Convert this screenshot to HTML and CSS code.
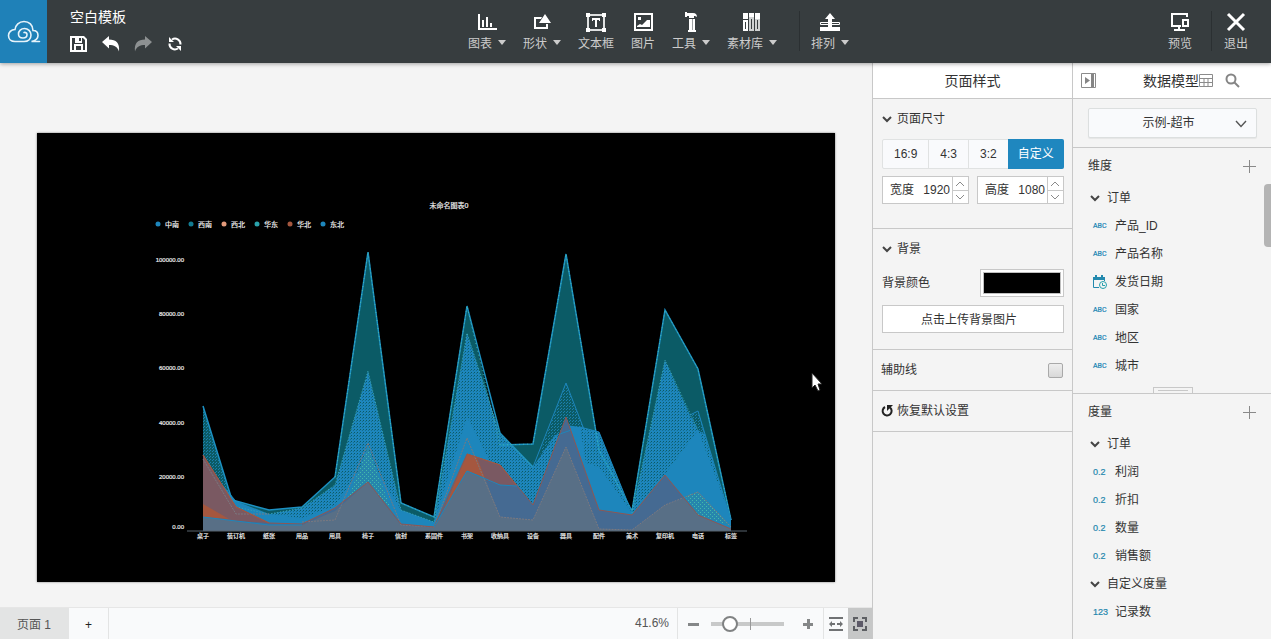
FILE: index.html
```html
<!DOCTYPE html>
<html lang="zh-CN">
  <head>
    <meta charset="UTF-8" />
    <meta name="viewport" content="width=device-width, initial-scale=1.0" />
    <title>空白模板</title>
    <link rel="stylesheet" href="styles.css">
  </head>
  <body>
    <header class="topbar">
      <div class="brand">
        <a class="logo" href="#" aria-label="首页">
          <svg width="34" height="24" viewBox="0 0 34 24" fill="none" stroke="#e6f3fa" stroke-width="1.600" stroke-linecap="round">
            <path d="M32.500 21.500H24.500C29 20.500 31 18.500 31 15.500C31 12.500 29 10.500 26 10.500C26 5 22 1.500 17 1.500C12 1.500 8.500 5 8 9.500C4 9.500 1.500 12.500 1.500 15.500C1.500 19 4 21.500 8 21.500H17C21.500 21.500 24 18.500 24 15C24 11.500 21 8.500 17.500 8.500C14 8.500 11.500 11 11.500 14C11.500 16.500 13.500 18 16 18C18.500 18 20 16.500 20 14.500C20 13 18.500 12 17 12.500" />
          </svg>
        </a>
        <div class="doc">
          <h1 class="doc-title">空白模板</h1>
          <div class="doc-actions">
            <button class="icon-btn" aria-label="保存">
              <svg width="18" height="16" viewBox="0 0 18 16"><path fill="#fff" fill-rule="evenodd" d="M0 0H14L17 3V16H0ZM2 2V14H4V8H13V14H15V4L13 2H12V7H5V2ZM9 2H11V5H9ZM6 10V14H11V10Z" /></svg>
            </button>
            <button class="icon-btn" aria-label="撤销">
              <svg width="18" height="16" viewBox="0 0 18 16"><path fill="#fff" d="M0 6L7 0V3.500C14 3.500 18 7 17 15.500C15.500 10.500 12 9 7 9V12.500Z" /></svg>
            </button>
            <button class="icon-btn" aria-label="重做" disabled>
              <svg width="18" height="16" viewBox="0 0 18 16"><path fill="#8d9192" d="M18 6L11 0V3.500C4 3.500 0 7 1 15.500C2.500 10.500 6 9 11 9V12.500Z" /></svg>
            </button>
            <button class="icon-btn" aria-label="刷新">
              <svg width="18" height="16" viewBox="0 0 18 16"><g fill="none" stroke="#fff" stroke-width="2"><path d="M6 3.500A5.500 5.500 0 0 1 14.500 8.500" /><path d="M12 12.500A5.500 5.500 0 0 1 3.500 7.500" /></g><path fill="#fff" d="M3 1V6H8ZM15 15V10H10Z" /></svg>
            </button>
          </div>
        </div>
      </div>

      <nav class="tools">
        <button class="tool">
          <svg width="20" height="20" viewBox="0 0 20 20"><path fill="#fff" d="M1 2H3V16H20V18H1ZM5 8H7V15H5ZM9 5H11V15H9ZM13 11H15V15H13Z" /></svg>
          <span class="tool-label">图表<i class="caret"></i></span>
        </button>
        <button class="tool">
          <svg width="20" height="20" viewBox="0 0 20 20"><path fill="#fff" d="M13 2L19 11H7ZM2 5H10L9 7H4V15H14V12H16V17H2Z" /></svg>
          <span class="tool-label">形状<i class="caret"></i></span>
        </button>
        <button class="tool">
          <svg width="22" height="20" viewBox="0 0 22 20"><path fill="none" stroke="#dfe1e1" stroke-width="2" d="M3 3H19V18H3Z" /><path fill="#fff" d="M1 1H5V5H1ZM17 1H21V5H17ZM1 16H5V20H1ZM17 16H21V20H17ZM7 6H15V9H14V8H12V15H10V8H8V9H7Z" /></svg>
          <span class="tool-label">文本框</span>
        </button>
        <button class="tool">
          <svg width="20" height="20" viewBox="0 0 20 20"><path fill="#fff" fill-rule="evenodd" d="M1 1H20V19H1ZM3 3V17H18V3ZM5 5H8V8H5ZM4 14L7 12L9 13L14 8H17V15H4Z" /></svg>
          <span class="tool-label">图片</span>
        </button>
        <button class="tool">
          <svg width="16" height="20" viewBox="0 0 16 20"><path fill="#fff" d="M2 0H4V1H10C13 1 14 3 14 5C13 4 12 4 11 4V6H6V4H4V5H2ZM6 7H12V18H13V20H5V18H6Z" /><path stroke="#9da1a2" d="M9.500 7V18" /></svg>
          <span class="tool-label">工具<i class="caret"></i></span>
        </button>
        <button class="tool">
          <svg width="20" height="20" viewBox="0 0 20 20"><path fill="#fff" fill-rule="evenodd" d="M1 1H6V7H1ZM1 8H6V19H1ZM3 10V17H4V10Z" /><path fill="#cfd2d2" fill-rule="evenodd" d="M7 1H12V19H7ZM9 7V17H10V7ZM13 1H18V19H13ZM15 8V17H16V8Z" /><path fill="#fff" d="M7 1H12V5H7ZM13 1H18V7H13Z" /></svg>
          <span class="tool-label">素材库<i class="caret"></i></span>
        </button>
        <span class="divider"></span>
        <button class="tool">
          <svg width="22" height="20" viewBox="0 0 22 20"><path fill="#fff" d="M11 1L16 7H13V15H21V19H1V15H9V7H6Z" /><path fill="none" stroke="#fff" d="M9 10.500H1.500V12.500H9M13 10.500H20.500V12.500H13" /></svg>
          <span class="tool-label">排列<i class="caret"></i></span>
        </button>
      </nav>

      <div class="session">
        <button class="tool">
          <svg width="20" height="20" viewBox="0 0 20 20"><path fill="none" stroke="#fff" stroke-width="2" d="M17 5V2H2V14H11M9 14V18M4 18H15M13 8H18V14H13Z" /></svg>
          <span class="tool-label">预览</span>
        </button>
        <span class="divider"></span>
        <button class="tool">
          <svg width="20" height="20" viewBox="0 0 20 20"><path stroke="#fff" stroke-width="3" d="M2 2L18 18M18 2L2 18" /></svg>
          <span class="tool-label">退出</span>
        </button>
      </div>
    </header>

    <div class="workspace">
      <main class="editor">
        <div class="stage">
          <div class="board">
            <svg class="chart" viewBox="37 133 798 449" role="img" aria-label="未命名图表0">
              <defs>
                <pattern id="denseDots" width="3" height="3" patternUnits="userSpaceOnUse">
                  <rect width="3" height="3" fill="#1d86bc" />
                  <rect width="1" height="1" fill="#0b5b66" />
                  <rect x="2" y="1" width="1" height="1" fill="#156f8e" />
                </pattern>
                <pattern id="darkDots" width="3" height="3" patternUnits="userSpaceOnUse">
                  <rect width="3" height="3" fill="#0b5b66" />
                  <rect width="1" height="1" fill="#1b80ad" />
                  <rect x="2" y="1" width="1" height="1" fill="#1b80ad" />
                </pattern>
                <pattern id="mintDots" width="4" height="4" patternUnits="userSpaceOnUse">
                  <rect width="4" height="4" fill="#2686ad" />
                  <rect width="1" height="1" fill="#43b9aa" />
                  <rect x="2" y="2" width="1" height="1" fill="#43b9aa" />
                </pattern>
              </defs>

              <!-- areas, back to front -->
              <path fill="#0b5b66" d="M203 531V459L236 501L269 510L302 507L335 477L368 252L401 503L434 517L467 306L500 445L533 444L566 254L599 450L632 511L665 310L698 369L731 520V531Z" />
              <path fill="url(#darkDots)" d="M203 531V406L232 500L236 531ZM541 450L566 383L590 445L599 432L632 513V531H533Z" />
              <path fill="url(#denseDots)" d="M236 508L269 514L302 508L335 485L368 371L401 510L434 522L467 333L500 434L533 467L554 436L580 427L599 432L632 513L665 360L690 415L698 411L731 520V531H236Z" />
              <path fill="url(#darkDots)" d="M690 415L698 411L704 434L698 430Z" />
              <path fill="#1d86bc" d="M222 484L236 501L269 514L302 518L335 506L368 456L401 510L434 522L467 417L490 462L533 504L566 425L580 427L586 463L599 467L632 513L665 474L698 430L731 518V531H236Z" />
              <path fill="url(#mintDots)" d="M344 508L368 447L392 512L368 482ZM685 496L698 492L731 526L698 515Z" />
              <path fill="#456a92" d="M203 531V455L236 507L269 523L302 524L335 508L368 482L401 524L434 527L467 454L500 465L533 505L566 417L599 510L632 515L665 475L698 515L731 529V531Z" />
              <path fill="#7a5962" d="M203 531V455L236 507L269 523L236 521ZM472 456L500 465L517 486L500 485L485 480Z" />
              <path fill="#a5573f" d="M203 504L229 519L203 517ZM437 525L467 454L477 458L485 478L467 471Z" />
              <path fill="#586f86" d="M203 531V517L236 521L269 525L302 525L335 511L368 482L401 525L434 527L467 471L485 478L500 517L533 520L566 447L599 529L632 530L665 505L684 498L698 515L731 529V531Z" />

              <!-- series lines -->
              <g fill="none">
                <path stroke="#1c90c2" stroke-width="1.500" d="M203 406L232 500L236 501L269 510L302 507L335 477L368 252L401 503L434 517L467 306L500 433L533 467M500 445L533 444L566 254L599 450L632 511L665 310L698 369L731 520" />
                <path stroke="#45b9ae" stroke-dasharray="1 3" d="M335 477L368 252L401 503L434 517L467 306L500 445L533 444L566 254L599 450L632 511L665 310L698 369L731 520" />
                <path stroke="#1d86bc" d="M533 467L566 383L590 445M554 436L580 427L599 432L632 513M690 415L698 411L731 520" />
                <path stroke="#3ca6b0" stroke-dasharray="1 2" d="M236 507L269 514L302 508L335 485L368 371L401 510L434 522L467 333L500 434L533 467M632 513L665 360L698 430" />
                <path stroke="#7b7980" stroke-dasharray="2 1" d="M203 459L236 514L269 514M302 522L335 520L368 443L401 525L434 527L467 438L500 517L533 520L566 447L599 529L632 530L665 505L698 492L731 527" />
                <path stroke="#8d5754" d="M203 455L236 507L269 523L302 524L335 508L368 482L401 524L434 527L467 454L500 465L533 505L566 417L599 510L632 515L665 475L698 515L731 529" />
                <path stroke="#a5573f" d="M203 455L236 507L269 523M467 454L500 465L517 486" />
                <path stroke="#1d86bc" d="M203 517L236 521L269 525H302M434 527L467 471L500 485L517 486" />
                <path stroke="#59656e" d="M187 531H747" />
              </g>

              <g class="chart-legend">
                <circle cx="158" cy="224" r="2.500" fill="#1d86bc" /><text x="165" y="227">中南</text>
                <circle cx="191" cy="224" r="2.500" fill="#127b92" /><text x="198" y="227">西南</text>
                <circle cx="224" cy="224" r="2.500" fill="#e39a7a" /><text x="231" y="227">西北</text>
                <circle cx="257" cy="224" r="2.500" fill="#2aa3ac" /><text x="264" y="227">华东</text>
                <circle cx="290" cy="224" r="2.500" fill="#a5573f" /><text x="297" y="227">华北</text>
                <circle cx="323" cy="224" r="2.500" fill="#1d86bc" /><text x="330" y="227">东北</text>
                <text class="centered" x="449" y="208">未命名图表0</text>
              </g>
              <g class="chart-scale">
                <text x="184" y="262">100000.00</text>
                <text x="184" y="316">80000.00</text>
                <text x="184" y="370">60000.00</text>
                <text x="184" y="425">40000.00</text>
                <text x="184" y="479">20000.00</text>
                <text x="184" y="529">0.00</text>
              </g>
              <g class="chart-categories">
                <text x="203" y="538">桌子</text>
                <text x="236" y="538">装订机</text>
                <text x="269" y="538">纸张</text>
                <text x="302" y="538">用品</text>
                <text x="335" y="538">用具</text>
                <text x="368" y="538">椅子</text>
                <text x="401" y="538">信封</text>
                <text x="434" y="538">系固件</text>
                <text x="467" y="538">书架</text>
                <text x="500" y="538">收纳具</text>
                <text x="533" y="538">设备</text>
                <text x="566" y="538">器具</text>
                <text x="599" y="538">配件</text>
                <text x="632" y="538">美术</text>
                <text x="665" y="538">复印机</text>
                <text x="698" y="538">电话</text>
                <text x="731" y="538">标签</text>
              </g>
            </svg>
            <svg class="pointer" width="12" height="20" viewBox="0 0 12 20"><path fill="#fff" stroke="#222" stroke-width="1" d="M1 1V16L4 13L7 19L9 18L7 12H11Z" /></svg>
          </div>
        </div>

        <footer class="statusbar">
          <button class="page-tab page-tab-active">页面 1</button>
          <button class="page-tab page-tab-add" aria-label="新建页面">+</button>
          <output class="zoom-value">41.6%</output>
          <div class="zoom">
            <button class="icon-btn" aria-label="缩小"><svg width="12" height="12" viewBox="0 0 12 12"><path fill="#858788" d="M1 5H12V8H1Z" /></svg></button>
            <input class="zoom-range" type="range" min="0" max="100" value="20" aria-label="缩放">
            <button class="icon-btn" aria-label="放大"><svg width="12" height="12" viewBox="0 0 12 12"><path fill="#858788" d="M1 5H5V1H8V5H11V8H8V11H5V8H1Z" /></svg></button>
          </div>
          <button class="fit" aria-label="适应宽度">
            <svg width="16" height="16" viewBox="0 0 16 16"><path fill="#707274" d="M1 1H15V3H1ZM1 13H15V15H1ZM1 8L4 5V7H7V9H4V11ZM15 8L12 5V7H9V9H12V11Z" /></svg>
          </button>
          <button class="fit fit-active" aria-label="适应页面">
            <svg width="16" height="16" viewBox="0 0 16 16"><path fill="none" stroke="#5d5f63" stroke-width="2" d="M6 2H2V6M10 2H14V6M6 14H2V10M10 14H14V10" /><path fill="#5d5a68" d="M5 5H11V11H5Z" /></svg>
          </button>
        </footer>
      </main>

      <aside class="panel">
        <h2 class="panel-title">页面样式</h2>

        <section class="group group-size">
          <h3 class="group-title"><svg class="chevron" width="10" height="8" viewBox="0 0 10 8"><path d="M1 2L5 6L9 2" /></svg>页面尺寸</h3>
          <div class="ratios">
            <button class="ratio">16:9</button>
            <button class="ratio">4:3</button>
            <button class="ratio">3:2</button>
            <button class="ratio ratio-active">自定义</button>
          </div>
          <div class="dimensions">
            <label class="stepper">
              <span>宽度</span>
              <input type="text" value="1920">
              <svg class="stepper-arrows" width="16" height="26" viewBox="0 0 16 26"><path d="M0.500 0V26M0 13.500H16" stroke="#c8c8c8" /><path d="M4 9L8 5L12 9M4 18L8 22L12 18" stroke="#8a8a8a" /></svg>
            </label>
            <label class="stepper">
              <span>高度</span>
              <input type="text" value="1080">
              <svg class="stepper-arrows" width="16" height="26" viewBox="0 0 16 26"><path d="M0.500 0V26M0 13.500H16" stroke="#c8c8c8" /><path d="M4 9L8 5L12 9M4 18L8 22L12 18" stroke="#8a8a8a" /></svg>
            </label>
          </div>
        </section>

        <section class="group">
          <h3 class="group-title"><svg class="chevron" width="10" height="8" viewBox="0 0 10 8"><path d="M1 2L5 6L9 2" /></svg>背景</h3>
          <div class="field">
            <label for="bgColor">背景颜色</label>
            <input class="swatch" id="bgColor" type="color" value="#000000">
          </div>
          <button class="upload">点击上传背景图片</button>
        </section>

        <section class="group group-row">
          <label for="guides">辅助线</label>
          <input class="check" id="guides" type="checkbox">
        </section>

        <section class="group group-row">
          <button class="reset">
            <svg width="12" height="14" viewBox="0 0 12 14"><path fill="none" stroke="#222" stroke-width="2" d="M4 3A4.500 4.500 0 1 0 9 3.500" /><path fill="#222" d="M12 1H6V7L8 5Z" /></svg>
            恢复默认设置
          </button>
        </section>
      </aside>

      <aside class="panel panel-data">
        <header class="panel-title panel-title-tools">
          <button class="icon-btn" aria-label="收起">
            <svg width="15" height="15" viewBox="0 0 15 15"><path fill="none" stroke="#8b8b8b" d="M0.500 0.500H14.500V14.500H0.500Z" /><path fill="#858585" d="M4 4L9 7.500L4 11ZM10 1H13V14H10Z" /></svg>
          </button>
          <h2 class="panel-name">数据模型</h2>
          <button class="icon-btn" aria-label="表格">
            <svg width="14" height="14" viewBox="0 0 14 14"><path fill="none" stroke="#8b8b8b" d="M0.500 0.500H13.500V12.500H0.500ZM0 4.500H14M0 8.500H14M5 4V13M9 4V13" /></svg>
          </button>
          <button class="icon-btn icon-search" aria-label="搜索">
            <svg width="15" height="15" viewBox="0 0 15 15" fill="none" stroke="#858585" stroke-width="2"><circle cx="6" cy="6" r="4.500" /><path d="M9.500 9.500L14 14" /></svg>
          </button>
        </header>

        <div class="source">
          <select class="source-select" aria-label="数据源"><option>示例-超市</option></select>
          <svg class="source-arrow" width="12" height="8" viewBox="0 0 12 8"><path fill="none" stroke="#555" stroke-width="1.400" d="M1 1L6 6.500L11 1" /></svg>
        </div>

        <section class="fields fields-dimension">
          <div class="fields-head">
            <h3 class="fields-name">维度</h3>
            <button class="icon-btn" aria-label="添加维度"><svg width="13" height="13" viewBox="0 0 13 13"><path fill="none" stroke="#898989" d="M0 6.500H13M6.500 0V13" /></svg></button>
          </div>
          <ul class="tree">
            <li class="tree-group"><svg class="chevron" width="10" height="8" viewBox="0 0 10 8"><path d="M1 2L5 6L9 2" /></svg>订单</li>
            <li class="tree-item"><span class="type type-text">ABC</span>产品_ID</li>
            <li class="tree-item"><span class="type type-text">ABC</span>产品名称</li>
            <li class="tree-item">
              <span class="type"><svg width="14" height="14" viewBox="0 0 14 14"><path fill="#2389ae" d="M0 2H12V5H0ZM2 0H4V3H2ZM8 0H10V3H8Z" /><path fill="none" stroke="#2389ae" d="M0.500 4V12.500H6M11.500 4V6" /><circle cx="10" cy="10" r="3.500" fill="#f4f4f4" stroke="#26a0ad" /><path fill="none" stroke="#26a0ad" d="M9.500 8V10.500H12" /></svg></span>发货日期
            </li>
            <li class="tree-item"><span class="type type-text">ABC</span>国家</li>
            <li class="tree-item"><span class="type type-text">ABC</span>地区</li>
            <li class="tree-item"><span class="type type-text">ABC</span>城市</li>
          </ul>
          <span class="scroll-thumb"></span>
          <span class="resize-grip"></span>
        </section>

        <section class="fields">
          <div class="fields-head">
            <h3 class="fields-name">度量</h3>
            <button class="icon-btn" aria-label="添加度量"><svg width="13" height="13" viewBox="0 0 13 13"><path fill="none" stroke="#898989" d="M0 6.500H13M6.500 0V13" /></svg></button>
          </div>
          <ul class="tree">
            <li class="tree-group"><svg class="chevron" width="10" height="8" viewBox="0 0 10 8"><path d="M1 2L5 6L9 2" /></svg>订单</li>
            <li class="tree-item"><span class="type">0.2</span>利润</li>
            <li class="tree-item"><span class="type">0.2</span>折扣</li>
            <li class="tree-item"><span class="type">0.2</span>数量</li>
            <li class="tree-item"><span class="type">0.2</span>销售额</li>
            <li class="tree-group"><svg class="chevron" width="10" height="8" viewBox="0 0 10 8"><path d="M1 2L5 6L9 2" /></svg>自定义度量</li>
            <li class="tree-item"><span class="type">123</span>记录数</li>
          </ul>
        </section>
      </aside>
    </div>
  </body>
</html>
```
FILE: styles.css
```css
* {
  margin: 0;
  padding: 0;
  box-sizing: border-box;
}

body {
  font-family: "Liberation Sans", "Noto Sans CJK SC", sans-serif;
  font-size: 12px;
  line-height: 18px;
  color: #333;
  background: #f4f4f4;
  height: 100vh;
  display: flex;
  flex-direction: column;
  overflow: hidden;
}

button,
input,
select {
  font: inherit;
  color: inherit;
}

button {
  background: none;
  border: none;
  cursor: pointer;
}

svg {
  display: block;
}

/* top bar */
.topbar {
  display: flex;
  flex: none;
  height: 63px;
  background: #373d3f;
  box-shadow: 0 1px 4px rgba(0, 0, 0, 0.35);
  position: relative;
  z-index: 1;
}

.brand {
  display: flex;
  flex: 0 0 468px;
}

.logo {
  display: flex;
  align-items: center;
  justify-content: center;
  width: 47px;
  background: #1f81b8;
}

.doc {
  padding: 8px 0 0 23px;
}

.doc-title {
  font-size: 14px;
  font-weight: 400;
  color: #fff;
}

.doc-actions {
  display: flex;
  gap: 14px;
  margin-top: 10px;
}

.tools,
.session {
  display: flex;
  gap: 17px;
}

.session {
  gap: 12px;
  margin-left: auto;
  padding-right: 23px;
}

.tool {
  display: flex;
  flex-direction: column;
  align-items: center;
  padding-top: 12px;
  color: #ccc;
}

.session .tool:first-child {
  margin-right: 7px;
}

.tool-label {
  display: flex;
  align-items: center;
  margin-top: 3px;
}

.caret {
  margin: -4px 0 0 6px;
  border: 4px solid transparent;
  border-top: 5px solid #ccc;
  border-bottom: none;
}

.divider {
  width: 1px;
  height: 40px;
  margin-top: 11px;
  background: #2b3032;
}

.tools .divider {
  margin-left: 5px;
  margin-right: -6px;
}

/* workspace */
.workspace {
  display: flex;
  flex: 1;
  min-height: 0;
}

.editor {
  flex: 1;
  min-width: 0;
  display: flex;
  flex-direction: column;
}

.stage {
  flex: 1;
  min-height: 0;
  display: flex;
  align-items: flex-start;
  padding: 70px 37px 0;
}

.board {
  flex: 1;
  position: relative;
  background: #000;
  box-shadow: 0 0 2px rgba(0, 0, 0, 0.5);
}

.chart {
  width: 100%;
}

.chart text {
  fill: #eee;
  stroke: #eee;
  stroke-width: 0.2px;
}

.chart-legend {
  font-size: 7px;
}

.chart-legend .centered {
  text-anchor: middle;
}

.chart-scale {
  font-size: 6px;
  text-anchor: end;
}

.chart-categories {
  font-size: 6px;
  text-anchor: middle;
}

.pointer {
  position: absolute;
  right: 12px;
  top: 239px;
}

/* status bar */
.statusbar {
  display: flex;
  align-items: stretch;
  height: 32px;
  background: #f9fafb;
  border-top: 1px solid #e6e6e6;
  color: #555;
}

.page-tab {
  width: 40px;
  padding-top: 2px;
  border-right: 1px solid #e3e4e4;
}

.page-tab-active {
  width: 69px;
  background: #e3e4e4;
}

.page-tab-add {
  color: #222;
}

.zoom-value {
  margin-left: auto;
  padding: 6px 8px 0 0;
}

.zoom {
  display: flex;
  align-items: center;
  gap: 12px;
  padding: 0 9px;
  border-left: 1px solid #e3e4e4;
  border-right: 1px solid #e3e4e4;
}

.zoom-range {
  appearance: none;
  width: 73px;
  height: 16px;
  margin: 0 6px 0 0;
  background: linear-gradient(#999, #999) 39px 2px / 1px 12px no-repeat,
    linear-gradient(#c8c9c9, #c8c9c9) 0 6px / 100% 4px no-repeat;
}

.zoom-range::-webkit-slider-thumb {
  appearance: none;
  width: 16px;
  height: 16px;
  border: 2px solid #808283;
  border-radius: 50%;
  background: #fff;
}

.fit {
  display: flex;
  align-items: center;
  justify-content: center;
  width: 24px;
}

.fit-active {
  background: #c6c7c7;
}

/* side panels */
.panel {
  flex: 0 0 200px;
  border-left: 1px solid #c8c8c8;
}

.panel-data {
  flex-basis: 199px;
}

.panel-title {
  height: 36px;
  border-bottom: 1px solid #c8c8c8;
  background: #fff;
  font-size: 14px;
  font-weight: 400;
  line-height: 36px;
  text-align: center;
}

.panel-title-tools {
  display: flex;
  align-items: center;
  padding: 0 31px 0 8px;
}

.panel-name {
  margin-left: auto;
  font-size: 14px;
  font-weight: 400;
}

.icon-search {
  margin-left: 12px;
}

.chevron {
  flex: none;
  fill: none;
  stroke: #444;
  stroke-width: 2px;
}

.group {
  padding: 11px 8px 16px 9px;
  border-bottom: 1px solid #c8c8c8;
}

.group-size {
  padding-bottom: 24px;
}

.group-title {
  display: flex;
  align-items: center;
  gap: 5px;
  font-size: 12px;
  font-weight: 400;
}

.ratios {
  display: flex;
  height: 30px;
  margin-top: 11px;
  border: 1px solid #e0e2e2;
  border-radius: 2px;
  background: #f9fafc;
}

.ratio {
  padding: 0 11px;
  border-right: 1px solid #e0e2e2;
}

.ratio-active {
  flex: 1;
  margin: -1px;
  padding: 0;
  border: none;
  border-radius: 0 2px 2px 0;
  background: #1f87bf;
  color: #fff;
}

.dimensions {
  display: flex;
  gap: 8px;
  margin-top: 7px;
}

.stepper {
  display: flex;
  align-items: center;
  flex: 1;
  min-width: 0;
  height: 28px;
  padding-left: 7px;
  border: 1px solid #c8c8c8;
  background: #fff;
}

.stepper span {
  flex: none;
}

.stepper input {
  flex: 1;
  min-width: 0;
  width: 28px;
  padding-right: 2px;
  border: none;
  background: none;
  text-align: right;
}

.stepper-arrows {
  flex: none;
  fill: none;
}

.field {
  display: flex;
  align-items: center;
  justify-content: space-between;
  margin-top: 11px;
}

.swatch {
  width: 84px;
  height: 28px;
  padding: 2px;
  border: 1px solid #c8c8c8;
  background: #fff;
}

.swatch::-webkit-color-swatch-wrapper {
  padding: 0;
}

.swatch::-webkit-color-swatch {
  border: 1px solid #c0c0c0;
}

.upload {
  width: 100%;
  height: 28px;
  margin-top: 8px;
  padding: 2px 8px 0 0;
  border: 1px solid #c8c8c8;
  background: #fff;
}

.group-row {
  display: flex;
  align-items: center;
  justify-content: space-between;
  height: 41px;
  padding: 0 9px 0 8px;
}

.check {
  appearance: none;
  width: 15px;
  height: 15px;
  border: 1px solid #a9a9a9;
  border-radius: 2px;
  background: linear-gradient(#eee, #d8d8d8);
}

.reset {
  display: flex;
  align-items: center;
  gap: 4px;
}

/* data model */
.source {
  position: relative;
  padding: 9px 14px 9px 15px;
  border-bottom: 1px solid #c8c8c8;
}

.source-select {
  display: block;
  appearance: none;
  width: 100%;
  height: 30px;
  padding-right: 8px;
  border: 1px solid #dcdfdf;
  border-radius: 2px;
  background: #f9fafc;
  box-shadow: 0 1px 1px rgba(0, 0, 0, 0.06);
  text-align: center;
  text-align-last: center;
}

.source-arrow {
  position: absolute;
  right: 24px;
  top: 21px;
}

.fields {
  position: relative;
}

.fields-dimension {
  padding-bottom: 13px;
  border-bottom: 1px solid #c8c8c8;
}

.fields-head {
  display: flex;
  align-items: center;
  justify-content: space-between;
  height: 36px;
  padding: 0 15px;
}

.fields-name {
  font-size: 12px;
  font-weight: 400;
}

.tree {
  list-style: none;
}

.tree-group,
.tree-item {
  display: flex;
  align-items: center;
  height: 28px;
}

.tree-group {
  gap: 7px;
  padding-left: 17px;
}

.tree-item {
  padding-left: 20px;
}

.type {
  width: 22px;
  font-size: 9px;
  color: #1f87ae;
  -webkit-text-stroke: 0.2px #1f87ae;
}

.type-text {
  font-family: Roboto, "Liberation Sans", sans-serif;
  font-size: 7px;
  color: #1f87bf;
}

.scroll-thumb {
  position: absolute;
  right: 0;
  top: 36px;
  width: 7px;
  height: 63px;
  border-radius: 4px 0 0 4px;
  background: #b4b4b4;
}

.resize-grip {
  position: absolute;
  left: 80px;
  bottom: 0;
  width: 40px;
  height: 6px;
  border: 1px solid #c8c8c8;
  border-bottom: none;
}

.resize-grip::after {
  content: "";
  display: block;
  height: 1px;
  margin: 2px 4px;
  background: #c8c8c8;
}
```
